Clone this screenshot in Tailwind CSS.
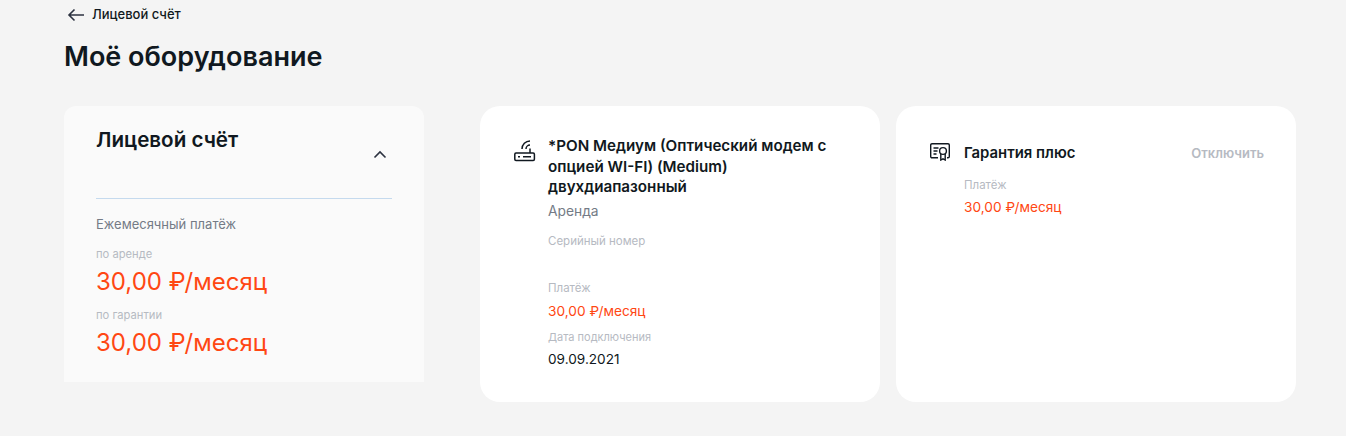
<!DOCTYPE html>
<html lang="ru">
<head>
    <meta charset="UTF-8">
    <title>Моё оборудование</title>
    <script src="https://cdn.jsdelivr.net/npm/@tailwindcss/browser@4"></script>
</head>
<body class="bg-[#f4f4f4] font-['Inter',sans-serif] text-[#101820] h-[436px] overflow-hidden">
    <div class="pl-16 pr-[50px]">
        <a class="flex items-center h-[28px] pl-[3px] gap-[7px] text-[13px] font-medium pt-[1px]">
            <svg width="18" height="14" viewBox="0 0 18 14" fill="none" stroke="#2c3240" stroke-width="1.6"><path d="M17 7H2M7.5 1.5 2 7l5.5 5.5"/></svg>
            <span>Лицевой счёт</span>
        </a>
        <h1 class="mt-[11px] text-[27px] leading-[36px] font-semibold">Моё оборудование</h1>

        <div class="flex mt-[31px] items-start">
            <section class="w-[360px] h-[276px] bg-[#fafafa] rounded-t-xl px-8 pt-[20px] mr-14">
                <div class="flex justify-between h-[73px] border-b border-[#c5daee]">
                    <h2 class="text-[20.6px] leading-7 font-semibold">Лицевой счёт</h2>
                    <svg class="mt-[24px] mr-[5px]" width="14" height="9" viewBox="0 0 14 9" fill="none" stroke="#2c3240" stroke-width="1.6"><path d="M1.5 7.5 7 2l5.5 5.5"/></svg>
                </div>
                <p class="mt-[16px] text-[13px] leading-[18px] text-[#747b86]">Ежемесячный платёж</p>
                <p class="mt-[13px] text-[11.2px] leading-4 text-[#b6bac2]">по аренде</p>
                <p class="mt-[4px] text-[24px] leading-8 text-[#ff4713]">30,00 ₽/месяц</p>
                <p class="mt-[9px] text-[11.2px] leading-4 text-[#b6bac2]">по гарантии</p>
                <p class="mt-[4px] text-[24px] leading-8 text-[#ff4713]">30,00 ₽/месяц</p>
            </section>

            <section class="w-[400px] h-[296px] bg-white rounded-[20px] pl-8 pr-12 pt-[30px] flex gap-[12px] mr-4">
                <svg class="mt-[4px] ml-[2px] shrink-0" width="22" height="22" viewBox="0 0 22 22" fill="none" stroke="#101820" stroke-width="1.5">
                    <rect x="0.8" y="13" width="19.6" height="7.4" rx="1.2"/>
                    <path d="M4 16.7h2M9 16.7h8M16 13V8.5"/>
                    <path d="M12 9a4 4 0 0 1 4-4M8 9a8 8 0 0 1 8-8"/>
                </svg>
                <div class="flex-1">
                    <h3 class="text-[15.2px] leading-[20.5px] font-semibold">*PON Медиум (Оптический модем с опцией WI-FI) (Medium) двухдиапазонный</h3>
                    <p class="mt-[3px] text-[13.8px] leading-5 text-[#747b86]">Аренда</p>
                    <p class="mt-[12px] text-[11.5px] leading-4 text-[#b6bac2]">Серийный номер</p>
                    <p class="mt-[31px] text-[11.5px] leading-4 text-[#b6bac2]">Платёж</p>
                    <p class="mt-[5px] text-[13.7px] leading-5 text-[#ff4713]">30,00 ₽/месяц</p>
                    <p class="mt-[8px] text-[11px] leading-4 text-[#b6bac2]">Дата подключения</p>
                    <p class="mt-[4px] text-[13.6px] leading-5">09.09.2021</p>
                </div>
            </section>

            <section class="w-[400px] h-[296px] bg-white rounded-[20px] pl-8 pr-8 pt-[36px] flex gap-[14px]">
                <svg class="mt-[1px] ml-[2px] shrink-0" width="20" height="18" viewBox="0 0 20 18" fill="none" stroke="#101820" stroke-width="1.4">
                    <path d="M8 14.8H2A1.3 1.3 0 0 1 .7 13.5V2A1.3 1.3 0 0 1 2 .7h16A1.3 1.3 0 0 1 19.3 2v11.5a1.3 1.3 0 0 1-1.3 1.3h-1"/>
                    <path d="M3.5 5h5M3.5 8h4M3.5 11h3"/>
                    <circle cx="13" cy="8" r="3.4"/>
                    <path d="M10.8 11v6l2.2-1.2 2.2 1.2v-6"/>
                </svg>
                <div class="flex-1">
                    <div class="flex justify-between pt-[1px]">
                        <h3 class="text-[14.9px] leading-5 font-semibold">Гарантия плюс</h3>
                        <span class="text-[13px] leading-5 font-semibold text-[#b6bac2]">Отключить</span>
                    </div>
                    <p class="mt-[14px] text-[11.5px] leading-4 text-[#b6bac2]">Платёж</p>
                    <p class="mt-[4px] text-[13.7px] leading-5 text-[#ff4713]">30,00 ₽/месяц</p>
                </div>
            </section>
        </div>
    </div>
</body>
</html>
